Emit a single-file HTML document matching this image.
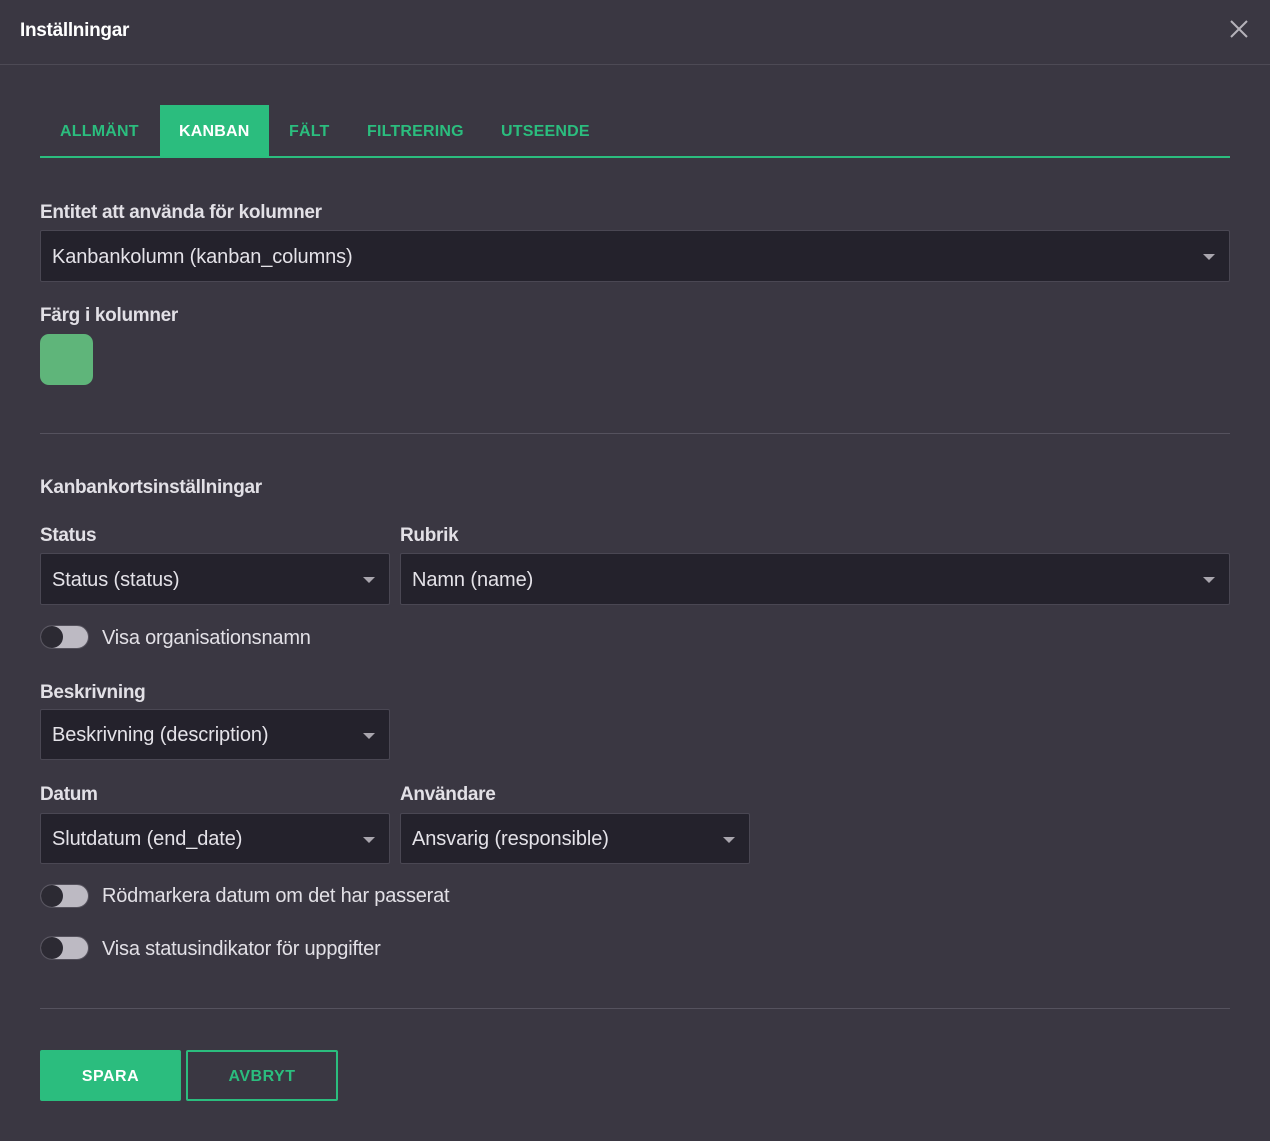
<!DOCTYPE html>
<html><head><meta charset="utf-8"><style>
*{margin:0;padding:0;box-sizing:border-box}
body{width:1270px;height:1141px;background:#3a3742;font-family:"Liberation Sans",sans-serif;color:#e4e2e8;position:relative;overflow:hidden}
.a{position:absolute}
.lbl{font-weight:bold;font-size:19px;letter-spacing:-0.3px;color:#e2e0e6}
.in{position:absolute;background:#24222c;border:1px solid #4a4753;border-radius:2px;font-size:20px;letter-spacing:-0.1px;color:#e4e2e8;padding-left:11px;display:flex;align-items:center;padding-top:2px}
.in:after{content:"";position:absolute;right:14px;top:50%;margin-top:-2px;border-left:6px solid transparent;border-right:6px solid transparent;border-top:6px solid #a9a6ae}
.tab{position:absolute;top:106px;height:52px;line-height:52px;font-size:16px;font-weight:bold;color:#2bbd7e;letter-spacing:0.2px}
.tg{position:absolute;left:40px;width:49px;height:24px;border-radius:12px;background:#bdbac3;border:1px solid #55525d}
.tg:before{content:"";position:absolute;left:0;top:0;width:22px;height:22px;border-radius:50%;background:#2c2a33}
.tt{position:absolute;left:102px;font-size:20px;letter-spacing:-0.2px;color:#e2e0e6}
.hr{position:absolute;left:40px;width:1190px;height:1px;background:#55525e}
</style></head><body>
<div class="a" style="left:20px;top:20px;font-size:19px;font-weight:bold;letter-spacing:-0.3px;color:#fff">Inställningar</div>
<svg class="a" style="left:1230px;top:20px" width="18" height="18" viewBox="0 0 18 18"><path d="M1 1L17 17M17 1L1 17" stroke="#b5b2ba" stroke-width="2"/></svg>
<div class="a" style="left:0;top:64px;width:1270px;height:1px;background:#4d4a55"></div>

<div class="a" style="left:40px;top:156px;width:1190px;height:2px;background:#2bbd7e"></div>
<div class="a" style="left:160px;top:105px;width:109px;height:52px;background:#2bbd7e"></div>
<div class="tab" style="left:60px">ALLMÄNT</div>
<div class="tab" style="left:179px;color:#fff">KANBAN</div>
<div class="tab" style="left:289px">FÄLT</div>
<div class="tab" style="left:367px">FILTRERING</div>
<div class="tab" style="left:501px">UTSEENDE</div>

<div class="a lbl" style="left:40px;top:202px">Entitet att använda för kolumner</div>
<div class="in" style="left:40px;top:230px;width:1190px;height:52px">Kanbankolumn (kanban_columns)</div>
<div class="a lbl" style="left:40px;top:305px">Färg i kolumner</div>
<div class="a" style="left:40px;top:334px;width:53px;height:51px;border-radius:9px;background:#5fb57a"></div>
<div class="hr" style="top:433px"></div>

<div class="a lbl" style="left:40px;top:477px">Kanbankortsinställningar</div>
<div class="a lbl" style="left:40px;top:525px">Status</div>
<div class="a lbl" style="left:400px;top:525px">Rubrik</div>
<div class="in" style="left:40px;top:553px;width:350px;height:52px">Status (status)</div>
<div class="in" style="left:400px;top:553px;width:830px;height:52px">Namn (name)</div>
<div class="tg" style="top:625px"></div><div class="tt" style="top:627px">Visa organisationsnamn</div>

<div class="a lbl" style="left:40px;top:682px">Beskrivning</div>
<div class="in" style="left:40px;top:709px;width:350px;height:51px">Beskrivning (description)</div>
<div class="a lbl" style="left:40px;top:784px">Datum</div>
<div class="a lbl" style="left:400px;top:784px">Användare</div>
<div class="in" style="left:40px;top:813px;width:350px;height:51px">Slutdatum (end_date)</div>
<div class="in" style="left:400px;top:813px;width:350px;height:51px">Ansvarig (responsible)</div>
<div class="tg" style="top:884px"></div><div class="tt" style="top:885px">Rödmarkera datum om det har passerat</div>
<div class="tg" style="top:936px"></div><div class="tt" style="top:938px">Visa statusindikator för uppgifter</div>
<div class="hr" style="top:1008px"></div>

<div class="a" style="left:40px;top:1050px;width:141px;height:51px;background:#2bbd7e;border-radius:2px;color:#fff;font-weight:bold;font-size:16px;text-align:center;line-height:53px;letter-spacing:0.5px">SPARA</div>
<div class="a" style="left:186px;top:1050px;width:152px;height:51px;border:2px solid #2bbd7e;border-radius:2px;color:#2bbd7e;font-weight:bold;font-size:16px;text-align:center;line-height:49px;letter-spacing:0.5px">AVBRYT</div>
</body></html>
